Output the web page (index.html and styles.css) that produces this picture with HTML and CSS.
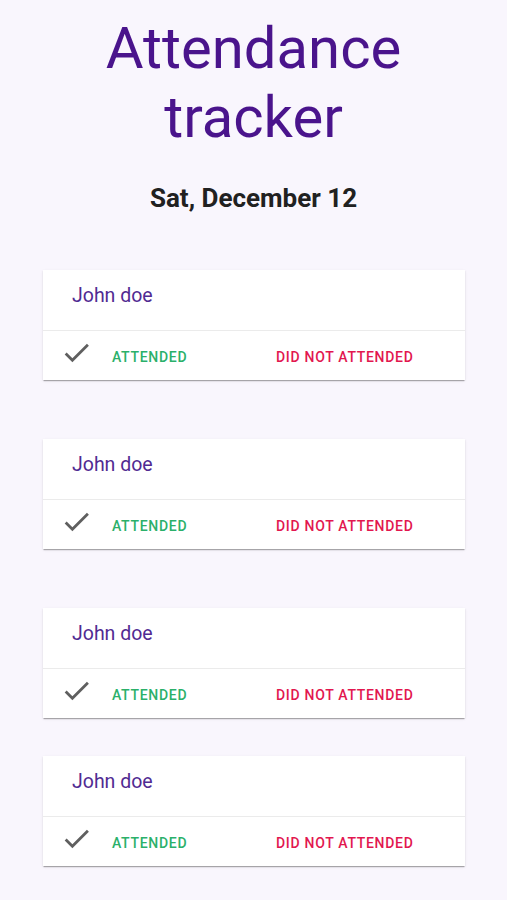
FILE: index.html
```html
<!DOCTYPE html>
<html>
<head>
<meta charset="utf-8">
<link rel="stylesheet" href="styles.css">
</head>
<body>
<main class="page">
  <h1 class="title">Attendance<br>tracker</h1>
  <h2 class="date">Sat, December 12</h2>
  <section class="list">
    <article class="card">
      <div class="card-head">John doe</div>
      <div class="card-actions">
        <svg class="check" viewBox="0 0 24 24"><path d="M9 16.17L4.83 12l-1.42 1.41L9 19 21 7l-1.41-1.41z"/></svg>
        <span class="btn btn-yes">ATTENDED</span>
        <span class="btn btn-no">DID NOT ATTENDED</span>
      </div>
    </article>
    <article class="card">
      <div class="card-head">John doe</div>
      <div class="card-actions">
        <svg class="check" viewBox="0 0 24 24"><path d="M9 16.17L4.83 12l-1.42 1.41L9 19 21 7l-1.41-1.41z"/></svg>
        <span class="btn btn-yes">ATTENDED</span>
        <span class="btn btn-no">DID NOT ATTENDED</span>
      </div>
    </article>
    <article class="card">
      <div class="card-head">John doe</div>
      <div class="card-actions">
        <svg class="check" viewBox="0 0 24 24"><path d="M9 16.17L4.83 12l-1.42 1.41L9 19 21 7l-1.41-1.41z"/></svg>
        <span class="btn btn-yes">ATTENDED</span>
        <span class="btn btn-no">DID NOT ATTENDED</span>
      </div>
    </article>
    <article class="card card-tight">
      <div class="card-head">John doe</div>
      <div class="card-actions">
        <svg class="check" viewBox="0 0 24 24"><path d="M9 16.17L4.83 12l-1.42 1.41L9 19 21 7l-1.41-1.41z"/></svg>
        <span class="btn btn-yes">ATTENDED</span>
        <span class="btn btn-no">DID NOT ATTENDED</span>
      </div>
    </article>
  </section>
</main>
</body>
</html>
```
FILE: styles.css
```css
html, body {
  margin: 0;
  padding: 0;
  background: #f9f6fd;
}
body {
  font-family: Roboto, "Liberation Sans", sans-serif;
}
.page {
  display: flex;
  flex-direction: column;
  align-items: center;
  padding-top: 14px;
}
.title {
  margin: 0;
  font-size: 58px;
  line-height: 69px;
  font-weight: 400;
  color: #4a148c;
  text-align: center;
}
.date {
  margin: 31px 0 0;
  font-size: 26px;
  line-height: 30px;
  font-weight: 700;
  color: #212121;
}
.list {
  display: flex;
  flex-direction: column;
  align-self: stretch;
  padding: 0 42px 0 43px;
  margin-top: 57px;
}
.card {
  background: #fff;
  box-shadow: 0 2px 1px -1px rgba(0,0,0,0.2), 0 1px 1px 0 rgba(0,0,0,0.12), 0 1px 3px 0 rgba(0,0,0,0.08);
  margin-bottom: 59px;
}
.card-tight {
  margin-top: -21px;
}
.card-head {
  height: 45px;
  padding: 15px 0 0 29px;
  font-size: 19.5px;
  line-height: 21px;
  color: #512a92;
  border-bottom: 1px solid #ebebeb;
}
.card-actions {
  display: flex;
  align-items: flex-start;
  height: 49px;
  padding-left: 17px;
}
.check {
  width: 33px;
  height: 33px;
  margin-top: 5px;
  fill: #5f5f5f;
}
.btn {
  margin-top: 18px;
  font-size: 14px;
  line-height: 16px;
  font-weight: 500;
  letter-spacing: 0.7px;
}
.btn-yes {
  width: 183px;
  padding-left: 19px;
  box-sizing: border-box;
  color: #2bb06a;
}
.btn-no {
  color: #e2174f;
}
```
